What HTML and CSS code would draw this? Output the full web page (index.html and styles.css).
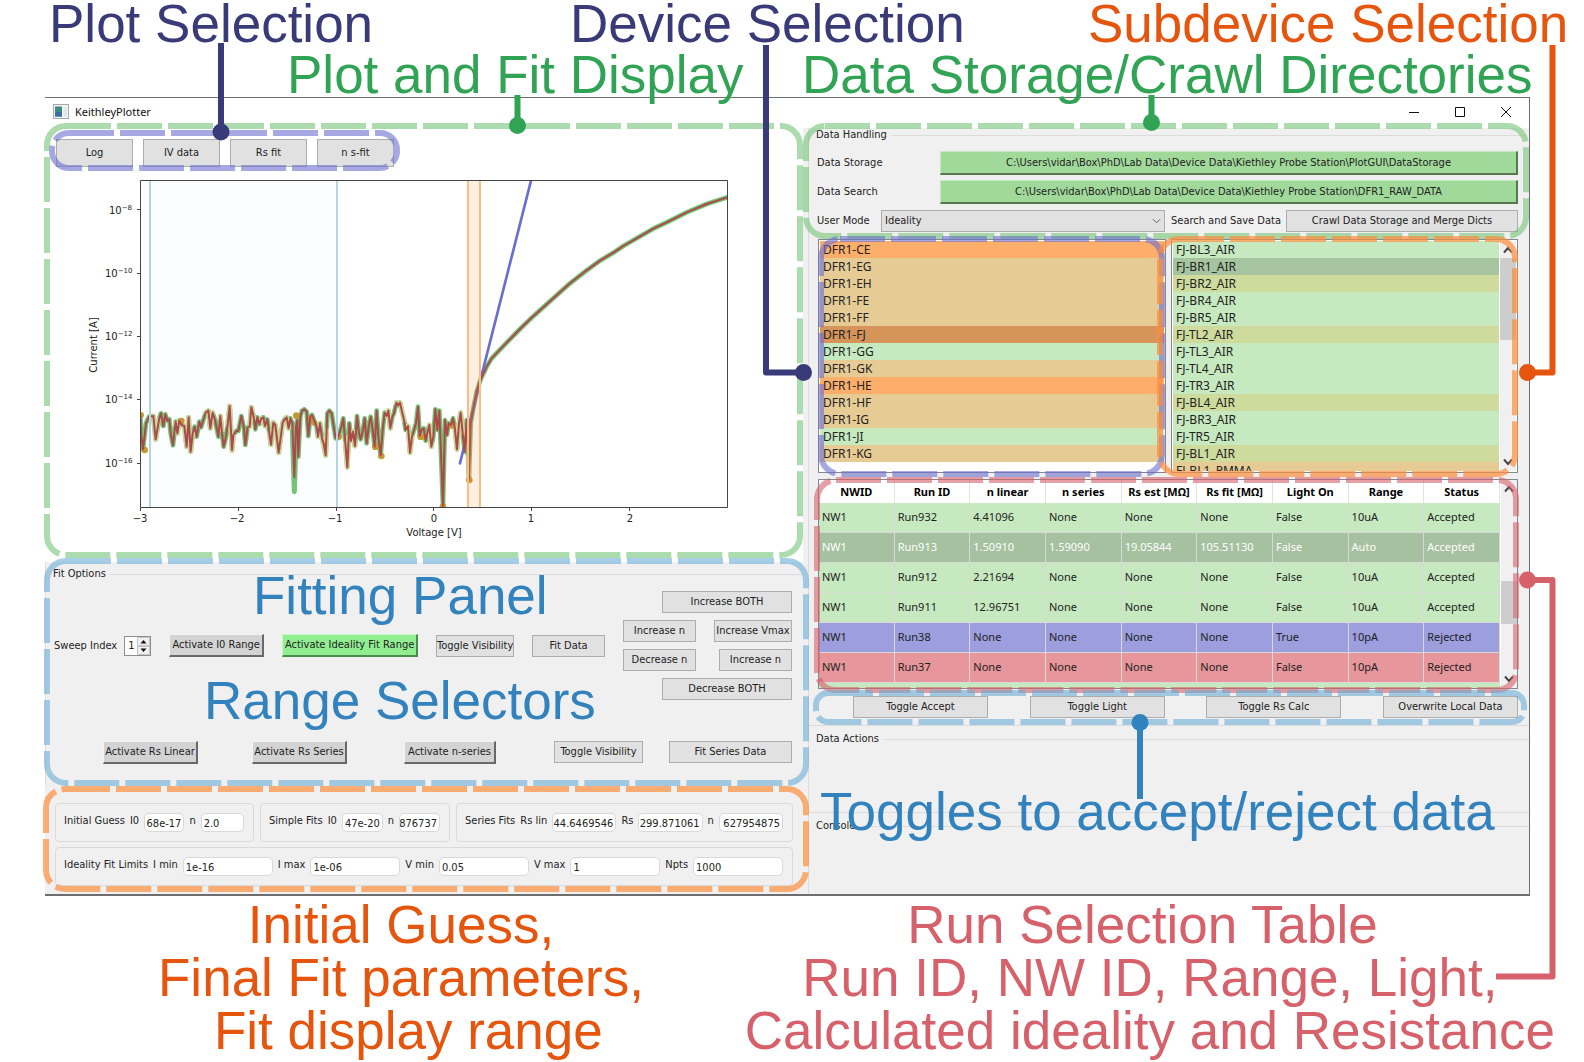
FILE: index.html
```html
<!DOCTYPE html>
<html lang="en">
<head>
<meta charset="utf-8">
<title>KeithleyPlotter overview</title>
<link rel="stylesheet" href="styles.css">
</head>
<body>
<main class="figure">
  <header class="captions-top">
    <div class="caption-row first">
      <span class="caption navy">Plot Selection</span>
      <span class="caption navy">Device Selection</span>
      <span class="caption orange">Subdevice Selection</span>
    </div>
    <div class="caption-row second">
      <span class="caption green">Plot and Fit Display</span>
      <span class="caption green">Data Storage/Crawl Directories</span>
    </div>
  </header>

  <section class="window">
    <div class="titlebar">
      <svg class="app-icon" viewBox="0 0 16 16"><rect x="0.5" y="0.5" width="15" height="14" fill="#f4f4f4" stroke="#a9a9a9"/><rect x="2" y="2.500" width="7" height="10" fill="#3f8a86"/><rect x="2" y="8" width="7" height="4.500" fill="#3c6f9c"/><rect x="10.500" y="2.500" width="3.500" height="10" fill="#dfe8ea"/></svg>
      <h1>KeithleyPlotter</h1>
      <div class="window-controls">
        <button type="button" aria-label="Minimize"><svg viewBox="0 0 12 12"><path d="M1 6.500H11"/></svg></button>
        <button type="button" aria-label="Maximize"><svg viewBox="0 0 12 12"><path d="M1.500 1.500H10.500V10.500H1.500Z"/></svg></button>
        <button type="button" aria-label="Close"><svg viewBox="0 0 12 12"><path d="M1 1L11 11M11 1L1 11"/></svg></button>
      </div>
    </div>

    <div class="columns">
      <div class="left">
        <section class="plot-panel">
          <div class="tabs">
            <button type="button">Log</button><button type="button">IV data</button><button type="button">Rs fit</button><button type="button">n s-fit</button>
            <span class="outline violet"><svg><rect rx="17"/></svg></span>
          </div>
          <svg class="plot" viewBox="45 167 758 395" role="img" aria-label="Current against voltage">
            <defs>
              <clipPath id="axes"><rect x="140" y="180" width="588" height="328"/></clipPath>
              <path id="trace" d="M301 735L304 800 309 838 318 760 327 740 340 738 347 808 358 745 363 730 370 768 376 733 382 752 388 748 392 790 399 826 407 755 412 790 418 752 425 765 433 768 440 830 446 742 452 845 458 790 464 770 470 800 478 755 483 772 490 750 497 728 505 722 511 775 518 728 525 750 535 800 541 738 546 790 551 830 558 800 563 765 569 708 576 840 580 795 590 782 595 783 604 738 612 775 616 825 623 772 629 770 634 712 642 745 646 778 652 742 658 762 664 745 670 742 675 768 682 748 688 790 693 824 700 758 706 765 716 848 728 758 733 750 740 742 746 775 751 745 757 760 763 922 768 770 772 750 775 860 781 740 786 722 793 718 800 725 805 798 811 740 816 735 822 750 830 770 834 800 840 760 846 805 851 820 857 856 862 730 868 722 875 730 881 770 887 805 893 805 898 790 904 770 910 745 916 820 922 892 928 760 933 812 939 785 945 828 951 738 957 790 962 808 969 780 974 745 980 820 986 770 992 740 998 780 1004 830 1010 722 1015 800 1022 856 1028 780 1034 728 1040 738 1045 722 1051 775 1057 740 1062 730 1069 698 1075 706 1080 698 1086 725 1092 750 1097 780 1104 768 1110 848 1116 800 1122 780 1128 760 1134 710 1139 798 1145 778 1151 775 1157 812 1163 785 1168 765 1174 830 1180 800 1186 718 1192 780 1198 722 1209 1008 1215 750 1221 795 1226 760 1233 765 1239 745 1244 770 1251 838 1257 760 1262 728 1268 790 1274 845 1280 750 1287 930 1292 760 1300 715 1310 665 1322 628 1340 590 1355 565 1372 547 1400 518 1440 477 1470 448 1510 412 1540 385 1590 340 1640 301 1680 272 1725 245 1750 228 1790 205 1840 176 1880 157 1940 127 2000 102 2062 82"/>
            </defs>
            <g fill="none" stroke-linejoin="round" stroke-linecap="round" clip-path="url(#axes)">
              <g transform="translate(40 170) scale(.33333)">
                <use href="#trace" stroke="#74c476" stroke-width="14"/>
                <path stroke="#74c476" stroke-width="15" d="M757 770L763 965 769 790"/>
                <path stroke="#cbd896" stroke-width="15" d="M340 738L347 808 355 750M407 760L412 790 418 752M433 768L440 830 446 742 452 845 458 790M497 728L505 722 511 775 518 728M541 738L546 780M563 765L569 708 576 842 580 795M629 770L634 712 642 745M664 745L675 768M688 790L693 824 700 758M706 765L716 848 728 758M740 742L746 775M834 800L840 760M846 805L857 856 860 780M916 820L922 892 926 800M939 785L945 828M1040 738L1045 722 1051 775M1069 698L1080 698 1092 750M1104 768L1110 848 1116 800M1168 765L1174 830M1244 770L1251 838 1257 760 1262 728 1268 790M1286 860L1288 910"/>
                <g fill="#c49a33"><circle cx="303" cy="735" r="9"/><circle cx="314" cy="840" r="10"/><circle cx="424" cy="753" r="10"/><circle cx="769" cy="737" r="10"/><circle cx="812" cy="745" r="9"/><circle cx="822" cy="758" r="9"/><circle cx="896" cy="800" r="10"/><circle cx="1006" cy="830" r="10"/><circle cx="1024" cy="858" r="10"/><circle cx="1142" cy="800" r="10"/><circle cx="1235" cy="767" r="9"/><circle cx="1288" cy="930" r="10"/><circle cx="1209" cy="1010" r="10"/></g>
                <path stroke="#6b6ecf" stroke-width="8" d="M1260 880L1320 635 1474 28"/>
                <use href="#trace" stroke="#ad494a" stroke-width="6"/>
              </g>
            </g>
            <path d="M150 180V508M337 180V508" fill="none" stroke="#b3d6e8" stroke-width="2"/>
            <rect x="150" y="180" width="187" height="328" fill="#6baed6" fill-opacity=".02"/>
            <rect x="468" y="180" width="12" height="328" fill="#fd8d3c" fill-opacity=".15"/>
            <path d="M468 180V508M480 180V508" stroke="#fdbe85" stroke-width="2"/>
            <path d="M140.500 180.500H727.500V507.500H140.500Z" fill="none" stroke="#444"/>
            <path d="M137 209.500H140M137 273.500H140M137 336.500H140M137 399.500H140M137 463.500H140M140.500 508V511M238.500 508V511M336.500 508V511M433.500 508V511M531.500 508V511M629.500 508V511" stroke="#444"/>
            <g class="tick-labels">
              <text x="109" y="214">10<tspan class="exp" dy="-4">−8</tspan></text>
              <text x="105" y="277">10<tspan class="exp" dy="-4">−10</tspan></text>
              <text x="105" y="340">10<tspan class="exp" dy="-4">−12</tspan></text>
              <text x="105" y="403">10<tspan class="exp" dy="-4">−14</tspan></text>
              <text x="105" y="467">10<tspan class="exp" dy="-4">−16</tspan></text>
              <g text-anchor="middle">
                <text x="140" y="522">−3</text><text x="237" y="522">−2</text><text x="335" y="522">−1</text><text x="434" y="522">0</text><text x="531" y="522">1</text><text x="630" y="522">2</text>
                <text x="434" y="536">Voltage [V]</text>
                <text transform="translate(97 345) rotate(-90)">Current [A]</text>
              </g>
            </g>
          </svg>
          <span class="outline leaf"><svg><rect rx="19"/></svg></span>
        </section>

        <section class="fit-panel">
          <h2 class="legend">Fit Options</h2>
          <div class="fit-row">
            <div class="sweep"><label for="sweep">Sweep Index</label>
              <span class="spin"><input id="sweep" type="text" value="1"><svg viewBox="0 0 13 18"><path d="M.5 .5H12.500V8.500H.5ZM.5 9.500H12.500V17.500H.5Z" fill="#f0f0f0" stroke="#c4c4c4"/><path d="M3.500 6.500L6.500 3L9.500 6.500ZM3.500 11.500L6.500 15L9.500 11.500Z" fill="#111"/></svg></span></div>
            <button type="button" class="raised w95">Activate I0 Range</button>
            <button type="button" class="raised active w136">Activate Ideality Fit Range</button>
            <button type="button" class="w78">Toggle Visibility</button>
            <button type="button" class="w73">Fit Data</button>
            <div class="nudges">
              <div class="end"><button type="button" class="w130">Increase BOTH</button></div>
              <div><button type="button" class="w73">Increase n</button><button type="button" class="w78">Increase Vmax</button></div>
              <div><button type="button" class="w73">Decrease n</button><button type="button" class="w73">Increase n</button></div>
              <div class="end"><button type="button" class="w130">Decrease BOTH</button></div>
            </div>
          </div>
          <div class="series-row">
            <button type="button" class="raised w95">Activate Rs Linear</button>
            <button type="button" class="raised w95">Activate Rs Series</button>
            <button type="button" class="raised w91">Activate n-series</button>
            <button type="button" class="w89">Toggle Visibility</button>
            <button type="button" class="w123">Fit Series Data</button>
          </div>
          <span class="caption blue over fitting">Fitting Panel</span>
          <span class="caption blue over range">Range Selectors</span>
          <span class="outline sky"><svg><rect rx="19"/></svg></span>
        </section>

        <section class="params">
          <div class="param-row">
            <div class="param-box"><span>Initial Guess</span><label for="g0">I0</label><input class="tail" id="g0" value="68e-17"><label for="gn">n</label><input id="gn" value="2.0"></div>
            <div class="param-box"><span>Simple Fits</span><label for="s0">I0</label><input class="tail" id="s0" value="47e-20"><label for="sn">n</label><input class="tail cut" id="sn" value="876737"></div>
            <div class="param-box"><span>Series Fits</span><label for="rl">Rs lin</label><input class="tail cut" id="rl" value="44.6469546"><label for="rs">Rs</label><input class="tail cut" id="rs" value="299.871061"><label for="rn">n</label><input class="tail cut" id="rn" value="627954875"></div>
          </div>
          <div class="param-box"><span>Ideality Fit Limits</span><label for="imin">I min</label><input id="imin" value="1e-16"><label for="imax">I max</label><input id="imax" value="1e-06"><label for="vmin">V min</label><input id="vmin" value="0.05"><label for="vmax">V max</label><input id="vmax" value="1"><label for="npts">Npts</label><input id="npts" value="1000"></div>
          <span class="outline amber"><svg><rect rx="19"/></svg></span>
        </section>
      </div>

      <div class="right">
        <section class="handling">
          <h2 class="legend">Data Handling</h2>
          <div class="path-row"><span>Data Storage</span><button type="button" class="raised path">C:\Users\vidar\Box\PhD\Lab Data\Device Data\Kiethley Probe Station\PlotGUI\DataStorage</button></div>
          <div class="path-row"><span>Data Search</span><button type="button" class="raised path">C:\Users\vidar\Box\PhD\Lab Data\Device Data\Kiethley Probe Station\DFR1_RAW_DATA</button></div>
          <div class="mode-row"><label for="mode">User Mode</label>
            <span class="combo"><select id="mode"><option>Ideality</option></select><svg viewBox="0 0 10 6"><path d="M1 1L5 5L9 1"/></svg></span>
            <span>Search and Save Data</span><button type="button">Crawl Data Storage and Merge Dicts</button></div>
          <span class="outline leaf"><svg><rect rx="19"/></svg></span>
        </section>

        <div class="data">
          <div class="lists">
            <div class="list devices">
              <ul>
                <li class="hot">DFR1-CE</li><li class="tan">DFR1-EG</li><li class="tan">DFR1-EH</li><li class="tan">DFR1-FE</li><li class="tan">DFR1-FF</li><li class="picked">DFR1-FJ</li><li class="mint">DFR1-GG</li><li class="tan">DFR1-GK</li><li class="hot">DFR1-HE</li><li class="tan">DFR1-HF</li><li class="tan">DFR1-IG</li><li class="mint">DFR1-JI</li><li class="tan">DFR1-KG</li>
              </ul>
              <span class="outline violet"><svg><rect rx="19"/></svg></span>
            </div>
            <div class="list subdevices">
              <ul>
                <li class="mint">FJ-BL3_AIR</li><li class="sage">FJ-BR1_AIR</li><li class="olive">FJ-BR2_AIR</li><li class="mint">FJ-BR4_AIR</li><li class="mint">FJ-BR5_AIR</li><li class="olive">FJ-TL2_AIR</li><li class="mint">FJ-TL3_AIR</li><li class="mint">FJ-TL4_AIR</li><li class="mint">FJ-TR3_AIR</li><li class="olive">FJ-BL4_AIR</li><li class="mint">FJ-BR3_AIR</li><li class="mint">FJ-TR5_AIR</li><li class="olive">FJ-BL1_AIR</li><li class="tan">FJ-BL1_PMMA</li>
              </ul>
              <div class="scrollbar"><svg viewBox="0 0 10 8"><path d="M1 6.500L5 2L9 6.500"/></svg><i></i><svg viewBox="0 0 10 8"><path d="M1 1.500L5 6L9 1.500"/></svg></div>
              <span class="outline amber"><svg><rect rx="19"/></svg></span>
            </div>
          </div>

          <div class="runs">
            <div class="runs-view">
              <div class="runs-scroll">
              <table>
                <thead><tr><th>NWID</th><th>Run ID</th><th>n linear</th><th>n series</th><th>Rs est [MΩ]</th><th>Rs fit [MΩ]</th><th>Light On</th><th>Range</th><th>Status</th></tr></thead>
                <tbody>
                  <tr class="mint"><td>NW1</td><td>Run932</td><td>4.41096</td><td>None</td><td>None</td><td>None</td><td>False</td><td>10uA</td><td>Accepted</td></tr>
                  <tr class="current"><td>NW1</td><td>Run913</td><td>1.50910</td><td>1.59090</td><td>19.05844</td><td>105.51130</td><td>False</td><td>Auto</td><td>Accepted</td></tr>
                  <tr class="mint"><td>NW1</td><td>Run912</td><td>2.21694</td><td>None</td><td>None</td><td>None</td><td>False</td><td>10uA</td><td>Accepted</td></tr>
                  <tr class="mint"><td>NW1</td><td>Run911</td><td>12.96751</td><td>None</td><td>None</td><td>None</td><td>False</td><td>10uA</td><td>Accepted</td></tr>
                  <tr class="lit"><td>NW1</td><td>Run38</td><td>None</td><td>None</td><td>None</td><td>None</td><td>True</td><td>10pA</td><td>Rejected</td></tr>
                  <tr class="rejected"><td>NW1</td><td>Run37</td><td>None</td><td>None</td><td>None</td><td>None</td><td>False</td><td>10pA</td><td>Rejected</td></tr>
                </tbody>
              </table>
              </div>
              <div class="scrollbar low"><svg viewBox="0 0 10 8"><path d="M1 6.500L5 2L9 6.500"/></svg><i></i><svg viewBox="0 0 10 8"><path d="M1 1.500L5 6L9 1.500"/></svg></div>
            </div>
            <span class="outline rose"><svg><rect rx="19"/></svg></span>
          </div>

          <div class="toggles">
            <button type="button">Toggle Accept</button><button type="button">Toggle Light</button><button type="button">Toggle Rs Calc</button><button type="button">Overwrite Local Data</button>
            <span class="outline sky"><svg><rect rx="12"/></svg></span>
          </div>
        </div>

        <section class="group actions"><h2 class="legend">Data Actions</h2>
          <span class="caption blue over toggle-note">Toggles to accept/reject data</span></section>
        <section class="group console"><h2 class="legend">Console</h2></section>
      </div>
    </div>
  </section>

  <footer class="captions-bottom">
    <p class="caption orange">Initial Guess, 
Final Fit parameters, 
Fit display range</p>
    <p class="caption red">Run Selection Table 
Run ID, NW ID, Range, Light,
Calculated ideality and Resistance</p>
  </footer>

  <svg class="connectors" aria-hidden="true">
    <g class="navy"><path d="M221 43V132M766 45V372.500H803"/><circle cx="221" cy="132" r="8.500"/><circle cx="803.500" cy="372.500" r="8.500"/></g>
    <g class="green"><path d="M517.500 95V125M1151.500 95V122"/><circle cx="517.500" cy="125.500" r="8.500"/><circle cx="1151.500" cy="122.500" r="8.500"/></g>
    <g class="orange"><path d="M1552.500 45V372.500H1527"/><circle cx="1527.500" cy="372.500" r="8.500"/></g>
    <g class="red"><path d="M1527 580H1552.500V976.500H1496"/><circle cx="1527.500" cy="580" r="8.500"/></g>
    <g class="blue"><path d="M1140 722V799"/><circle cx="1140" cy="722.500" r="8.500"/></g>
  </svg>
</main>
</body>
</html>
```
FILE: styles.css
```css
* { box-sizing: border-box; }
body { margin: 0; background: #fff; color: #222; font: 11px/16px "DejaVu Sans Condensed", "DejaVu Sans", sans-serif; }
h1, h2, p, ul { margin: 0; padding: 0; font: inherit; }
ul { list-style: none; }
.figure { position: relative; }

/* Large captions and their colours */
.navy { color: #393b79; }
.green { color: #31a354; }
.orange { color: #e6550d; }
.blue { color: #3182bd; }
.red { color: #d6616b; }
.caption { font: 53px/53px "Liberation Sans", Arial, sans-serif; white-space: pre; }
.captions-top { position: relative; z-index: 4; height: 97px; }
.caption-row { display: grid; }
.caption-row.first { grid-template-columns: 521fr 518fr 496fr; padding-left: 49px; margin-bottom: 4px; }
.caption-row.second { grid-template-columns: 515fr 782fr; padding-left: 287px; }
.first .caption { line-height: 48px; }
.second .caption { line-height: 46px; }
.captions-bottom { display: flex; justify-content: space-between; padding: 2px 29px 5px 158px; text-align: center; }
.over { position: absolute; z-index: 4; }
.fitting { left: 207px; top: 7px; }
.range { left: 158px; top: 112px; }
.toggle-note { left: 12px; top: 59px; }
.connectors { position: absolute; inset: 0; width: 100%; height: 100%; z-index: 3; pointer-events: none; }
.connectors path { fill: none; stroke: currentColor; stroke-width: 6; stroke-linejoin: round; }
.connectors circle { fill: currentColor; }

/* Dashed frames over the panels */
.outline { position: absolute; z-index: 2; pointer-events: none; }
.outline svg { display: block; width: 100%; height: 100%; overflow: visible; }
.outline rect { x: 3px; y: 3px; width: calc(100% - 6px); height: calc(100% - 6px); fill: none; stroke: currentColor; stroke-width: 6; stroke-dasharray: 45 6; }
.leaf { color: rgba(116, 196, 118, .6); }
.violet { color: rgba(107, 110, 207, .6); }
.amber { color: rgba(253, 141, 60, .7); }
.sky { color: rgba(107, 174, 214, .6); }
.rose { color: rgba(214, 97, 107, .6); }
.tabs .outline { inset: -9px -6px -4px -7px; }
.plot-panel > .outline { inset: -5px 0 4px -1px; }
.fit-panel > .outline { inset: -4px -6px -1px -2px; }
.params > .outline { inset: 1px -6px 2px -2px; }
.handling > .outline { inset: -5px 0 0 0; }
.devices > .outline { inset: -4px 0 -5px -1px; }
.subdevices > .outline { inset: -4px -1px -5px -15px; }
.runs > .outline { inset: -2px -1px -4px -4px; }
.toggles > .outline { inset: -6px -9px -7px -5px; }

/* Controls */
button { height: 22px; padding: 0; border: 1px solid #adadad; background: #e1e1e1; color: #222; font: inherit; line-height: 18px; white-space: nowrap; }
button.raised { height: 23px; border-style: solid; border-width: 1px 2px 2px 1px; border-color: #f4f4f4 #696969 #696969 #f4f4f4; background: #d3d3d3; }
button.active { background: #90ee90; border-color: #c8f8c8 #4c8a4c #4c8a4c #c8f8c8; }
.w73 { width: 73px; }
.w78 { width: 78px; }
.w89 { width: 89px; }
.w91 { width: 92px; }
.w95 { width: 95px; }
.w123 { width: 123px; }
.w130 { width: 130px; }
.w136 { width: 136px; }
.legend { display: flex; align-items: center; gap: 4px; height: 16px; }
.legend::after { content: ""; flex: 1; height: 1px; background: #dcdcdc; }

/* Window */
.window { margin: 0 54px 0 45px; border: solid #6e6e6e; border-width: 1px 1px 2px 0; background: #f0f0f0; }
.titlebar { display: flex; align-items: center; gap: 6px; height: 30px; padding: 0 15px 2px 8px; background: #fff; }
.titlebar h1 { flex: 1; font: 11px/16px "Noto Sans", sans-serif; color: #111; }
.app-icon { width: 16px; height: 16px; }
.window-controls { display: flex; gap: 29px; }
.window-controls button { display: flex; align-items: center; width: 17px; height: 16px; border: 0; background: none; justify-content: center; }
.window-controls svg { width: 12px; height: 12px; fill: none; stroke: #111; flex: none; }
.columns { display: grid; grid-template-columns: 758fr 726fr; }
.left, .right { display: flex; flex-direction: column; min-width: 0; }
.right { border-left: 5px solid #f0f0f0; box-shadow: inset 1px 0 #dcdcdc; }

/* Plot */
.plot-panel { position: relative; padding-top: 11px; background: #fff; }
.tabs { position: relative; display: flex; gap: 10px; width: max-content; margin-left: 11px; }
.tabs button { width: 77px; height: 28px; }
.plot { display: block; width: 100%; height: auto; }
.tick-labels { font: 10px "DejaVu Sans", sans-serif; fill: #222; }
.exp { font-size: 7px; }

/* Fit controls */
.fit-panel { position: relative; padding: 4px 0 21px; border-left: 1px solid #dcdcdc; }
.fit-panel .legend { padding-left: 7px; }
.fit-row { display: flex; justify-content: space-between; align-items: center; padding: 9px 11px 0 8px; }
.sweep { display: flex; align-items: center; gap: 7px; }
.spin { display: flex; width: 27px; height: 20px; border: 1px solid #8e8e8e; background: #fff; }
.spin input { width: 12px; padding: 0 0 0 3px; border: 0; background: none; color: #222; font: inherit; outline: 0; }
.spin svg { width: 13px; height: 18px; }
.nudges { display: grid; gap: 7px; width: 169px; }
.nudges div { display: flex; justify-content: space-between; }
.nudges .end { justify-content: flex-end; }
.series-row { display: grid; grid-template-columns: 149fr 152fr 150fr 115fr 123fr; margin-top: 41px; padding: 0 11px 0 57px; }

/* Fit parameters */
.params { position: relative; display: grid; gap: 5px; padding: 18px 10px 8px; }
.param-row { display: grid; grid-template-columns: 199fr 190fr 337fr; gap: 6px; }
.param-box { display: flex; align-items: center; gap: 5px; height: 39px; padding: 0 9px 0 8px; border: 1px solid #dadada; border-radius: 4px; white-space: nowrap; min-width: 0; }
.param-box span, .param-box label { padding-bottom: 4px; }
.param-box input { flex: 1; min-width: 0; width: 0; height: 19px; padding: 2px 3px 0 2px; border: 1px solid #d9d9d9; border-radius: 5px; background: #fff; color: #222; font: inherit; }
.param-box .tail { padding: 2px 2px 0 0; text-align: right; }
.param-box .cut { direction: rtl; }

/* Data handling */
.handling { position: relative; margin-left: -5px; padding: 1px 11px 6px 14px; }
.handling .legend { margin: -2px -8px 8px -1px; }
.path-row { display: grid; grid-template-columns: 123px 1fr; align-items: center; height: 24px; margin-bottom: 5px; }
.path-row .path { height: 24px; background: #a1d99b; border-color: #c4ecc0 #55784f #55784f #c4ecc0; }
.mode-row { display: grid; grid-template-columns: 58px 284fr 109px 232fr; gap: 6px; align-items: center; height: 24px; white-space: nowrap; }
.combo { position: relative; display: flex; }
.combo select { appearance: none; width: 100%; height: 22px; padding: 0 3px; border: 1px solid #adadad; border-radius: 0; background: #e1e1e1; color: #222; font: inherit; }
.combo svg { position: absolute; right: 4px; top: 8px; width: 9px; height: 6px; fill: none; stroke: #555; }

/* Lists */
.data { padding: 0 11px 7px 10px; border-bottom: 1px solid #dcdcdc; }
.lists { display: grid; grid-template-columns: 348fr 347fr; gap: 5px; margin-bottom: 6px; }
.list { position: relative; display: flex; height: 234px; padding: 1px; border: 1px solid #828790; background: #fff; }
.list ul { flex: 1; overflow: hidden; font: 12px/17px "Noto Sans", sans-serif; }
.list li { height: 17px; padding-left: 3px; }
.hot { background: #fdae6b; }
.tan { background: #e7cb94; }
.picked { background: #d6945a; }
.mint { background: #c7e9c0; }
.sage { background: #a6c4a0; }
.olive { background: #cedb9c; }
.scrollbar { display: flex; flex: none; flex-direction: column; align-items: center; justify-content: space-between; width: 17px; padding: 5px 0; background: #f0f0f0; border-left: 1px solid #fff; }
.scrollbar svg { width: 10px; height: 8px; fill: none; stroke: #444; stroke-width: 2; }
.scrollbar i { width: 100%; height: 82px; margin: 4px 0 auto; background: #cdcdcd; }
.scrollbar.low i { height: 43px; margin: 88px 0 auto; }

/* Run table */
.runs { position: relative; margin-bottom: 7px; }
.runs-view { display: flex; height: 210px; overflow: hidden; border: 1px solid #828790; background: #c7e9c0; }
.runs-scroll { flex: 1; min-width: 0; }
table { width: 100%; border-collapse: separate; border-spacing: 0; table-layout: fixed; font: 11px/16px "Noto Sans", sans-serif; }
th { height: 23px; padding: 0; border-right: 1px solid #e2e2e2; background: #fff; color: #000; white-space: nowrap; }
td { height: 30px; padding: 0 0 2px 3px; border-right: 1px solid #d8d8d8; border-bottom: 1px solid #d8d8d8; }
.current { background: #a6c1a0; color: #fff; }
.lit { background: #9c9ede; }
.rejected { background: #e7969c; }
.toggles { position: relative; display: flex; justify-content: space-between; padding-left: 35px; }
.toggles button { width: 135px; }

/* Lower groups */
.group { position: relative; padding-top: 5px; }
.group .legend { padding-left: 8px; }
.actions { height: 87px; border-bottom: 1px solid #dcdcdc; }
.console { flex: 1; }
```
